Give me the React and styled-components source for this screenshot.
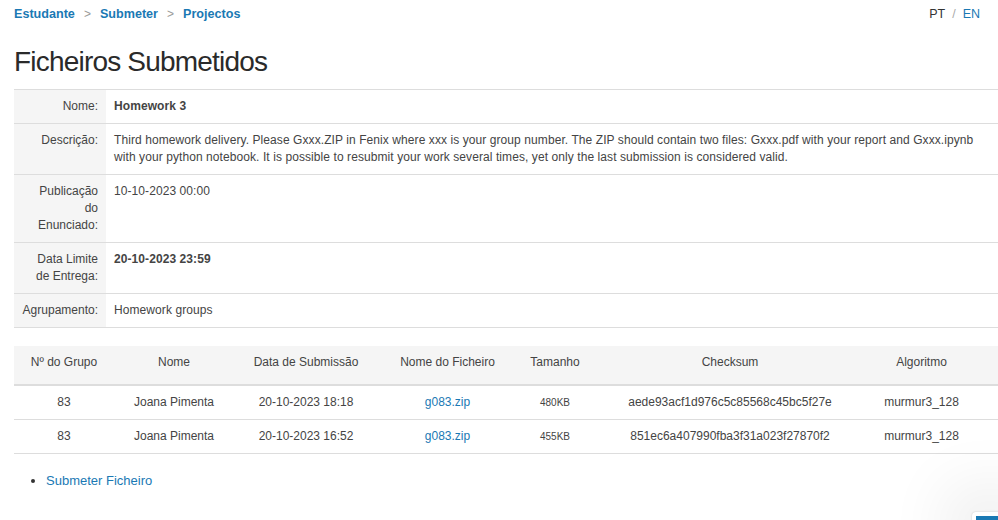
import React from "react";
import styled, { createGlobalStyle } from "styled-components";

const GlobalStyle = createGlobalStyle`
  html, body {
    margin: 0;
    padding: 0;
    background: #fff;
    font-family: "Liberation Sans", Arial, sans-serif;
    color: #333;
    overflow: hidden;
  }
`;

const Page = styled.div`
  position: relative;
  width: 998px;
  height: 520px;
  padding-left: 14px;
  box-sizing: border-box;
  overflow: hidden;
`;

const TopBar = styled.div`
  display: flex;
  justify-content: space-between;
  align-items: center;
  height: 27px;
  padding-right: 18px;
  font-size: 13px;
`;

const Crumbs = styled.div`
  display: flex;
  align-items: center;
  gap: 9px;
`;

const Crumb = styled.a`
  color: #1a79b4;
  font-weight: bold;
  font-size: 12.6px;
  text-decoration: none;
`;

const Sep = styled.span`
  color: #999;
  font-size: 12px;
`;

const Lang = styled.div`
  display: flex;
  gap: 7px;
  font-size: 12.5px;
`;

const LangItem = styled.span`
  color: ${(p) => (p.$active ? "#1a79b4" : "#333")};
`;

const Slash = styled.span`
  color: #aaa;
`;

const Title = styled.h1`
  margin: 20px 0 12px;
  font-size: 28px;
  font-weight: normal;
  color: #2a2a2a;
  line-height: 30px;
  letter-spacing: -0.8px;
`;

const DetailTable = styled.table`
  width: 984px;
  border-collapse: collapse;
  font-size: 12px;
  line-height: 17px;
  letter-spacing: 0.08px;
  border-bottom: 1px solid #ddd;
`;

const Row = styled.tr`
  border-top: 1px solid #ddd;
`;

const Label = styled.th`
  width: 76px;
  padding: 8px 8px;
  background: #f5f5f5;
  text-align: right;
  vertical-align: top;
  font-weight: normal;
  color: #444;
  letter-spacing: 0;
`;

const LabelLine = styled.span`
  display: block;
  white-space: nowrap;
`;

const Value = styled.td`
  padding: 8px 8px;
  vertical-align: top;
  color: #444;
  font-weight: ${(p) => (p.$bold ? "bold" : "normal")};
`;

const SubTable = styled.table`
  margin-top: 18px;
  width: 984px;
  border-collapse: collapse;
  table-layout: fixed;
  font-size: 12px;
  line-height: 17px;
  color: #444;
`;

const HeadCell = styled.th`
  background: #f5f5f5;
  font-weight: normal;
  padding: 8px 8px 13px;
  padding-right: ${(p) => (p.$last ? "30px" : "8px")};
  text-align: center;
  border-bottom: 2px solid #ddd;
  color: #444;
`;

const Cell = styled.td`
  padding: 8px 8px;
  padding-right: ${(p) => (p.$last ? "30px" : "8px")};
  text-align: center;
  border-bottom: 1px solid #ddd;
  font-size: ${(p) => (p.$small ? "10px" : "12px")};
`;

const FileLink = styled.a`
  color: #1a79b4;
  text-decoration: none;
`;

const Actions = styled.ul`
  margin: 19px 0 0;
  padding-left: 32px;
  font-size: 13px;
`;

const ActionLink = styled.a`
  color: #1a79b4;
  text-decoration: none;
`;

const Preview = styled.div`
  position: absolute;
  right: -10px;
  bottom: -20px;
  width: 36px;
  height: 28px;
  border-radius: 4px;
  background: #fff;
  box-shadow: 0 0 60px 30px rgba(0, 0, 0, 0.06), 0 0 2px rgba(0, 0, 0, 0.2);
  padding: 4px;
  box-sizing: border-box;
`;

const PreviewBar = styled.div`
  height: 4px;
  background: #1a79b4;
`;

const details = [
  { label: ["Nome:"], value: "Homework 3", bold: true },
  {
    label: ["Descrição:"],
    value:
      "Third homework delivery. Please Gxxx.ZIP in Fenix where xxx is your group number. The ZIP should contain two files: Gxxx.pdf with your report and Gxxx.ipynb with your python notebook. It is possible to resubmit your work several times, yet only the last submission is considered valid.",
  },
  { label: ["Publicação", "do", "Enunciado:"], value: "10-10-2023 00:00" },
  { label: ["Data Limite", "de Entrega:"], value: "20-10-2023 23:59", bold: true },
  { label: ["Agrupamento:"], value: "Homework groups" },
];

const columns = [
  { title: "Nº do Grupo", width: 100 },
  { title: "Nome", width: 120 },
  { title: "Data de Submissão", width: 144 },
  { title: "Nome do Ficheiro", width: 139 },
  { title: "Tamanho", width: 76 },
  { title: "Checksum", width: 274 },
  { title: "Algoritmo", width: 131 },
];

const submissions = [
  {
    group: "83",
    name: "Joana Pimenta",
    date: "20-10-2023 18:18",
    file: "g083.zip",
    size: "480KB",
    checksum: "aede93acf1d976c5c85568c45bc5f27e",
    algo: "murmur3_128",
  },
  {
    group: "83",
    name: "Joana Pimenta",
    date: "20-10-2023 16:52",
    file: "g083.zip",
    size: "455KB",
    checksum: "851ec6a407990fba3f31a023f27870f2",
    algo: "murmur3_128",
  },
];

function App() {
  return (
    <Page>
      <GlobalStyle />
      <TopBar>
        <Crumbs>
          <Crumb href="#">Estudante</Crumb>
          <Sep>&gt;</Sep>
          <Crumb href="#">Submeter</Crumb>
          <Sep>&gt;</Sep>
          <Crumb href="#">Projectos</Crumb>
        </Crumbs>
        <Lang>
          <LangItem>PT</LangItem>
          <Slash>/</Slash>
          <LangItem $active>EN</LangItem>
        </Lang>
      </TopBar>

      <Title>Ficheiros Submetidos</Title>

      <DetailTable>
        <tbody>
          {details.map((d) => (
            <Row key={d.label.join(" ")}>
              <Label>
                {d.label.map((l) => (
                  <LabelLine key={l}>{l}</LabelLine>
                ))}
              </Label>
              <Value $bold={d.bold}>{d.value}</Value>
            </Row>
          ))}
        </tbody>
      </DetailTable>

      <SubTable>
        <colgroup>
          {columns.map((c) => (
            <col key={c.title} style={{ width: c.width }} />
          ))}
        </colgroup>
        <thead>
          <tr>
            {columns.map((c, i) => (
              <HeadCell key={c.title} $last={i === columns.length - 1}>
                {c.title}
              </HeadCell>
            ))}
          </tr>
        </thead>
        <tbody>
          {submissions.map((s) => (
            <tr key={s.date}>
              <Cell>{s.group}</Cell>
              <Cell>{s.name}</Cell>
              <Cell>{s.date}</Cell>
              <Cell>
                <FileLink href="#">{s.file}</FileLink>
              </Cell>
              <Cell $small>{s.size}</Cell>
              <Cell>{s.checksum}</Cell>
              <Cell $last>{s.algo}</Cell>
            </tr>
          ))}
        </tbody>
      </SubTable>

      <Actions>
        <li>
          <ActionLink href="#">Submeter Ficheiro</ActionLink>
        </li>
      </Actions>

      <Preview>
        <PreviewBar />
      </Preview>
    </Page>
  );
}

export default App;
